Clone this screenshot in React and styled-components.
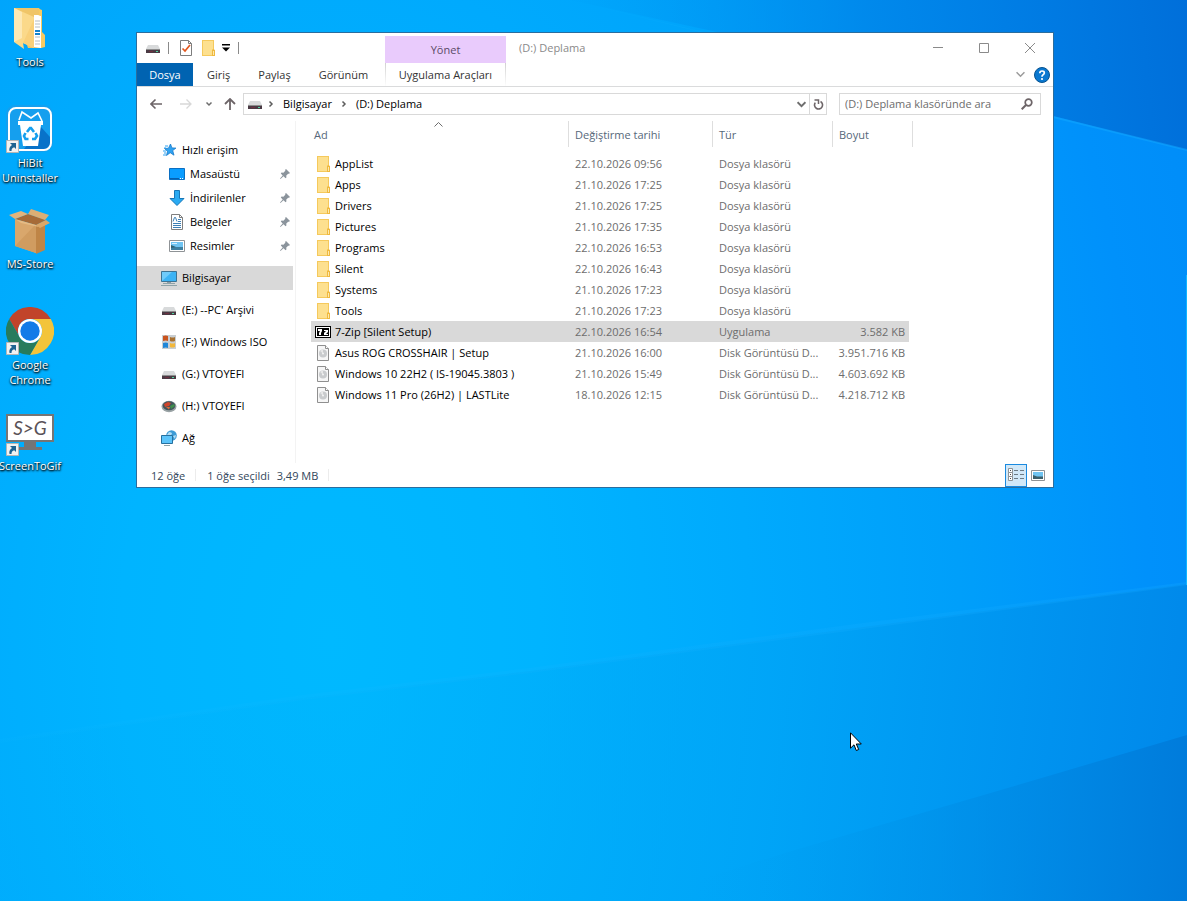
import React from 'react';
import styled, { createGlobalStyle, css } from 'styled-components';

const GlobalStyle = createGlobalStyle`
  * {
    box-sizing: border-box;
  }

  body {
    margin: 0;
    font-family: 'Open Sans', 'Noto Sans', sans-serif;
    font-size: 11px;
    line-height: 15px;
    color: #000;
  }

  button,
  input {
    font: inherit;
    color: inherit;
    margin: 0;
    padding: 0;
    border: 0;
    background: none;
  }

  svg {
    display: block;
    flex-shrink: 0;
  }
`;

const Desktop = styled.main`
  position: relative;
  min-height: 100vh;
  overflow: hidden;
  background: #00adff;
`;

const WallpaperSvg = styled.svg`
  position: absolute;
  inset: 0;
  width: 100%;
  height: 100%;
`;

const Shortcuts = styled.nav`
  position: relative;
  display: grid;
  grid-template-columns: 60px;
  grid-auto-rows: 101px;
  width: 60px;
  padding-top: 4px;
`;

const Shortcut = styled.a`
  display: flex;
  flex-direction: column;
  align-items: center;
  gap: 2px;
  color: #fff;
  text-align: center;
  text-decoration: none;
`;

const ShortcutIcon = styled.span`
  position: relative;
`;

const ShortcutBadge = styled.svg`
  position: absolute;
  left: 0;
  bottom: 0;
`;

const ShortcutLabel = styled.span`
  text-shadow: 0 1px 2px #000, 1px 1px 2px rgba(0, 0, 0, 0.9);
`;

const Window = styled.section`
  position: absolute;
  top: 32px;
  left: 136px;
  right: 133px;
  border: 1px solid #2a6d9e;
  background: #fff;
`;

const Ribbon = styled.header`
  display: flex;
  border-bottom: 1px solid #dadbdc;
`;

const RibbonStart = styled.div`
  flex: 0 0 248px;
`;

const RibbonContext = styled.div`
  flex: 0 0 121px;
  padding-top: 3px;
`;

const RibbonEnd = styled.div`
  flex: 1;
`;

const QuickBar = styled.div`
  display: flex;
  align-items: center;
  height: 30px;
  padding-left: 8px;
`;

const QuickButton = styled.button`
  display: flex;
  justify-content: center;
  width: ${(props) => props.$width || 22}px;
`;

const Separator = styled.span`
  width: 1px;
  height: 12px;
  margin-left: ${(props) => (props.$spaced ? 7 : 0)}px;
  background: #8a8a8a;
`;

const Tabs = styled.div`
  display: flex;
  height: 23px;
`;

const Tab = styled.button`
  padding: 0 14px;
  color: #333;

  ${(props) =>
    props.$active &&
    css`
      min-width: 56px;
      padding: 0 12px;
      background: #0063b1;
      color: #fff;
    `}
`;

const ContextTitle = styled.div`
  height: 27px;
  line-height: 27px;
  background: #e9cbfc;
  color: #5a4a66;
  text-align: center;
`;

const ContextTab = styled.button`
  width: 100%;
  height: 23px;
  border: 1px solid;
  border-width: 0 1px;
  border-image: linear-gradient(#cfcfcf, #fff) 1;
  color: #333;
`;

const TitleBar = styled.div`
  display: flex;
  align-items: center;
  height: 30px;
`;

const Title = styled.h1`
  flex: 1;
  margin: 0;
  padding: 0 0 2px 13px;
  font-size: 11px;
  font-weight: 400;
  color: #8a8a8a;
`;

const WindowButton = styled.button`
  display: flex;
  align-items: center;
  justify-content: center;
  width: 46px;
  height: 30px;
`;

const RibbonTools = styled.div`
  display: flex;
  align-items: center;
  justify-content: flex-end;
  gap: 8px;
  height: 23px;
  padding-right: 3px;
`;

const NavBar = styled.div`
  display: flex;
  align-items: center;
  height: 34px;
  padding: 0 12px 0 4px;
`;

const NavButton = styled.button`
  display: flex;
  justify-content: center;
  width: ${(props) => props.$width || 30}px;
`;

const AddressBar = styled.div`
  display: flex;
  flex: 1;
  align-items: center;
  height: 22px;
  padding-left: 3px;
  border: 1px solid #d9d9d9;
`;

const Crumb = styled.button`
  padding: 0 8px 2px;
`;

const CrumbArrow = styled.svg`
  margin-left: ${(props) => (props.$first ? 4 : 0)}px;
`;

const AddressEnd = styled.div`
  display: flex;
  align-items: center;
  height: 100%;
  margin-left: auto;
`;

const RefreshButton = styled.button`
  display: flex;
  align-items: center;
  justify-content: center;
  width: 17px;
  height: 100%;
  border-left: 1px solid #d9d9d9;
`;

const SearchBox = styled.label`
  display: flex;
  flex: 0 0 202px;
  align-items: center;
  height: 22px;
  margin-left: 12px;
  padding: 0 7px 0 5px;
  border: 1px solid #d9d9d9;
`;

const SearchInput = styled.input`
  flex: 1;
  min-width: 0;
  padding-bottom: 2px;
  outline: none;

  &::placeholder {
    color: #6d6d6d;
    opacity: 1;
  }
`;

const Body = styled.div`
  display: flex;
  min-height: 342px;
`;

const Sidebar = styled.nav`
  flex: 0 0 159px;
  padding: 17px 2px 0 0;
  border-right: 1px solid #f3f3f3;
`;

const SideGroup = styled.div`
  margin-bottom: 8px;
`;

const SideItem = styled.a`
  display: flex;
  align-items: center;
  gap: 5px;
  height: 24px;
  padding: 0 3px 0 ${(props) => (props.$nested ? 32 : 24)}px;
  background: ${(props) => (props.$active ? '#d9d9d9' : 'transparent')};
  color: #000;
  text-decoration: none;
  white-space: nowrap;
`;

const SideLabel = styled.span`
  flex: 1;
  padding-bottom: 2px;
`;

const Content = styled.div`
  flex: 1;
  min-width: 0;
  padding-left: 15px;
`;

const FileTable = styled.table`
  width: 602px;
  table-layout: fixed;
  border-spacing: 0;
`;

const HeaderCell = styled.th`
  position: relative;
  width: ${(props) => props.$width}px;
  height: 26px;
  padding: 0 0 0 ${(props) => (props.$first ? 3 : 6)}px;
  border-right: 1px solid #dedede;
  color: #56687a;
  font-weight: 400;
  text-align: left;
`;

const SortCaret = styled.svg`
  position: absolute;
  top: 1px;
  left: 123px;
`;

const FileBody = styled.tbody`
  &::before {
    content: '';
    display: block;
    height: 6px;
  }
`;

const FileRow = styled.tr`
  height: 21px;
  background: ${(props) => (props.$selected ? '#d9d9d9' : 'transparent')};
`;

const Cell = styled.td`
  padding: 0 6px;
  color: #6d6d6d;
  white-space: nowrap;
`;

const NameCell = styled(Cell)`
  padding: 0 4px;
  color: #000;
`;

const SizeCell = styled(Cell)`
  padding: 0 4px 0 0;
  border-right: 4px solid #fff;
  text-align: right;
`;

const FileName = styled.div`
  display: flex;
  align-items: center;
  gap: 4px;
`;

const StatusBar = styled.footer`
  display: flex;
  align-items: center;
  height: 24px;
  padding: 0 4px 0 14px;
  color: #33475b;
`;

const StatusText = styled.span`
  padding-right: ${(props) => (props.$tight ? 7 : 10)}px;
`;

const StatusDivider = styled.span`
  width: 1px;
  height: 12px;
  margin-right: 11px;
  background: #ececec;
`;

const ViewButtons = styled.div`
  display: flex;
  margin-left: auto;
`;

const ViewButton = styled.button`
  display: flex;
  align-items: center;
  justify-content: center;
  width: 22px;
  height: 23px;
  border: 1px solid ${(props) => (props.$active ? '#1a8ae0' : 'transparent')};
  background: ${(props) => (props.$active ? '#d1e8f8' : 'transparent')};
`;

const Pointer = styled.svg`
  position: absolute;
  top: 732px;
  left: 850px;
`;

const Wallpaper = () => (
  <WallpaperSvg viewBox="0 0 1187 901" preserveAspectRatio="none" aria-hidden="true">
    <defs>
      <radialGradient id="glow" gradientUnits="userSpaceOnUse" cx="330" cy="400" r="1050" gradientTransform="scale(1 1.6)">
        <stop offset="0" stopColor="#00b9ff" />
        <stop offset="0.2" stopColor="#00b4ff" />
        <stop offset="0.4" stopColor="#00aafd" />
        <stop offset="0.6" stopColor="#009ffa" />
        <stop offset="0.78" stopColor="#0091fb" />
        <stop offset="1" stopColor="#0088f5" />
      </radialGradient>
      <linearGradient id="top" gradientUnits="userSpaceOnUse" x1="560" y1="60" x2="1187" y2="0">
        <stop offset="0" stopColor="#0096f0" stopOpacity="0" />
        <stop offset="0.5" stopColor="#0084e8" stopOpacity="0.8" />
        <stop offset="1" stopColor="#006fda" />
      </linearGradient>
      <linearGradient id="low" gradientUnits="userSpaceOnUse" x1="350" y1="700" x2="1187" y2="800">
        <stop offset="0" stopColor="#00aff8" stopOpacity="0.2" />
        <stop offset="0.5" stopColor="#00a3f5" stopOpacity="0.7" />
        <stop offset="1" stopColor="#0088ea" />
      </linearGradient>
      <linearGradient id="corner" gradientUnits="userSpaceOnUse" x1="700" y1="860" x2="1187" y2="880">
        <stop offset="0" stopColor="#00a0f0" stopOpacity="0" />
        <stop offset="1" stopColor="#007bdb" />
      </linearGradient>
      <linearGradient id="beam" x1="0" x2="1">
        <stop offset="0" stopColor="#20bfff" stopOpacity="0.1" />
        <stop offset="1" stopColor="#10a5ff" stopOpacity="0.8" />
      </linearGradient>
    </defs>
    <rect width="1187" height="901" fill="url(#glow)" />
    <path d="M520 0H1187V150L1053 116L800 50L570 0Z" fill="url(#top)" />
    <path d="M570 0L1053 116L1187 149V151L1053 118Z" fill="url(#beam)" opacity="0.7" />
    <path d="M0 741L303 698L530 671L848 629L1187 584V901H0Z" fill="url(#low)" />
    <path d="M0 739L303 695L530 668L848 625L1187 582V585L848 631L530 673L303 700L0 743Z" fill="url(#beam)" opacity="0.4" />
    <path d="M630 901L795 850L1045 777L1187 735V901H640Z" fill="url(#corner)" />
    <path d="M1186 275h1v310h-1z" fill="#10b4ff" />
  </WallpaperSvg>
);

const DriveIcon = () => (
  <svg width="16" height="16" viewBox="0 0 16 16" aria-hidden="true">
    <path d="M3 5h10l2 4H1z" fill="#d8dadb" />
    <path d="M1 9h14v4H1z" fill="#4a3a44" />
    <path d="M1 9h14v1H1z" fill="#8d8d8d" />
    <path d="M11 11h2v1h-2z" fill="#4fd6a0" />
    <path d="M4 11h4v1H4z" fill="#6d3040" />
  </svg>
);

const FolderIcon = () => (
  <svg width="16" height="16" viewBox="0 0 16 16" aria-hidden="true">
    <path d="M2 0h12v10l1 1v5H2z" fill="#f5c95c" />
    <path d="M3 1h10v14H3z" fill="#fde08f" />
    <path d="M12 10l1-1l2 1v6h-3z" fill="#efb93f" />
    <path d="M13 11h1v4h-1z" fill="#fde9b0" />
  </svg>
);

const DiscFileIcon = () => (
  <svg width="16" height="16" viewBox="0 0 16 16" aria-hidden="true">
    <path d="M2.500.5h8l3 3v12h-11z" fill="#f6f6f6" stroke="#8f8f8f" />
    <path d="M10.500.5v3h3" fill="#fff" stroke="#8f8f8f" />
    <circle cx="8" cy="8.500" r="4" fill="#c9cbcd" />
    <path d="M8 8.500L5.200 6A4 4 0 0 1 8 4.800z" fill="#e8e8e8" />
    <circle cx="8" cy="8.500" r="1" fill="#f4f4f4" />
  </svg>
);

const SevenZipIcon = () => (
  <svg width="16" height="16" viewBox="0 0 16 16" aria-hidden="true">
    <path d="M0 2h16v12H0z" fill="#000" />
    <path d="M1 3h14v10H1z" fill="#fff" />
    <path d="M2 4h6v8H2zM8 4h6v8H8z" fill="#000" />
    <path d="M3 5h4v2L6 9v2H4V9l1-2H3z" fill="#fff" />
    <path d="M9 6h4v2l-2 2h2v1H9V9l2-2H9z" fill="#fff" />
  </svg>
);

const PageCheckIcon = () => (
  <svg width="16" height="16" viewBox="0 0 16 16" aria-hidden="true">
    <path d="M2.500.5h8l3 3v12h-11z" fill="#fff" stroke="#7d7d7d" />
    <path d="M10.500.5v3h3" fill="none" stroke="#7d7d7d" />
    <path d="M4.500 8.500l2.500 2.500l5-6" fill="none" stroke="#e2571e" strokeWidth="1.700" />
  </svg>
);

const StarIcon = () => (
  <svg width="16" height="16" viewBox="0 0 16 16" aria-hidden="true">
    <path d="M9.500 2l1.400 3.900l4 .2l-3.200 2.500l1.300 4.600l-3.800-2.500L5.500 13.500l1-4.200L3.500 6.500l4-.3z" fill="#2ea3f2" stroke="#1878c8" strokeWidth=".8" />
    <path d="M4 4h3M3 6h2M2 9h3M3 11h2M2 13h3" stroke="#2ea3f2" />
  </svg>
);

const ScreenIcon = () => (
  <svg width="16" height="16" viewBox="0 0 16 16" aria-hidden="true">
    <path d="M.5 2.500h15v11H.5z" fill="#0a9dff" stroke="#0a6fc2" />
    <path d="M1 12h9v1H1z" fill="#075fae" />
    <path d="M11 12h1v1h-1zM13 12h1v1h-1z" fill="#fff" />
  </svg>
);

const DownloadIcon = () => (
  <svg width="16" height="16" viewBox="0 0 16 16" aria-hidden="true">
    <path d="M5.500.5h5v8h4.500L8 15.500L1 8.500h4.500z" fill="#29aaf2" stroke="#1577b8" />
  </svg>
);

const DocumentIcon = () => (
  <svg width="16" height="16" viewBox="0 0 16 16" aria-hidden="true">
    <path d="M2.500.5h8l3 3v12h-11z" fill="#fff" stroke="#7f7f7f" />
    <path d="M10.500.5v3h3" fill="none" stroke="#7f7f7f" />
    <path d="M4 7.500l1.500-4h1L8 7.500M9 5.500h3M9 7.500h3M4 9.500h8M4 11.500h8M4 13.500h8" fill="none" stroke="#3c7fb5" />
  </svg>
);

const PictureIcon = () => (
  <svg width="16" height="16" viewBox="0 0 16 16" aria-hidden="true">
    <path d="M.5 2.500h15v11H.5z" fill="#fff" stroke="#8f9396" />
    <path d="M2 4h12v8H2z" fill="#6fc4f2" />
    <path d="M2 7l5 2h7v3H2z" fill="#2e6172" />
    <path d="M2 10l5-1h7v3H2z" fill="#3d7fa0" />
    <path d="M3 5h5v1H3z" fill="#d5efff" />
  </svg>
);

const ComputerIcon = () => (
  <svg width="16" height="16" viewBox="0 0 16 16" aria-hidden="true">
    <path d="M.5 1.500h15v10H.5z" fill="#3bb3f5" stroke="#3d7393" />
    <path d="M1 11V2h10z" fill="#6fcbfa" />
    <path d="M6 12h4v1H6z" fill="#8c9ba3" />
    <path d="M2 13h12v1H2zM0 15h16v1H0z" fill="#8fa3a8" />
  </svg>
);

const WindowsIcon = () => (
  <svg width="16" height="16" viewBox="0 0 16 16" aria-hidden="true">
    <path d="M1 1h14v14H1z" fill="#c9ced2" />
    <path d="M2 2q3-1 5 0v5q-2-1-5 0z" fill="#c9541e" />
    <path d="M9 3q3 1 5 0v4q-3 1-5 0z" fill="#a8702f" />
    <path d="M2 9q3-1 5 0v5q-2-1-5 0z" fill="#1f86d8" />
    <path d="M9 9q3 1 5 0v4q-3 1-5 0z" fill="#f2b73a" />
  </svg>
);

const DiscIcon = () => (
  <svg width="16" height="16" viewBox="0 0 16 16" aria-hidden="true">
    <ellipse cx="8" cy="8.500" rx="7.500" ry="5.800" fill="#9aa3a5" />
    <ellipse cx="8" cy="7.800" rx="6.300" ry="4.500" fill="#42555c" />
    <path d="M3 6l4-2l3 1l-2 3l-4 1z" fill="#d1452b" />
    <path d="M9 8l4-2l1 2l-4 3z" fill="#3f8f4c" />
    <path d="M5 9h4l-1 2.500z" fill="#d76a3a" />
  </svg>
);

const NetworkIcon = () => (
  <svg width="16" height="16" viewBox="0 0 16 16" aria-hidden="true">
    <circle cx="10.500" cy="5.500" r="5.300" fill="#3d9bd6" />
    <path d="M8 2q3 0 3 2l-2 2l-3-1zM12 6l3-1l-1 4z" fill="#b4def5" />
    <path d="M.5 5.500h11v8H.5z" fill="#5cc4fa" stroke="#27709e" />
    <path d="M3 15h6v1H3z" fill="#8fa3a8" />
  </svg>
);

const PinIcon = () => (
  <svg width="10" height="10" viewBox="0 0 10 10" aria-hidden="true">
    <path d="M6 0l4 4l-1 .8l-.8-.1L6.300 6.600l.1 1.800l-.8.8L3.500 7.300L.5 10L0 9.500l2.700-3L.8 4.400l.8-.8l1.800.1L5.300 1.800L5.200.8z" fill="#8b949c" />
  </svg>
);

const ToolsFolderIcon = () => (
  <svg width="48" height="48" viewBox="0 0 48 48" aria-hidden="true">
    <path d="M8 4h25l3 4v36H22z" fill="#f0c568" />
    <path d="M28 11h4l3 1v32l-7-1z" fill="#fff" />
    <path d="M29 17h5M29 20h5M29 23h5M29 33h5M29 37h5M29 40h5" stroke="#b4bdc6" />
    <path d="M29 27h5M29 30h5" stroke="#1383cf" strokeWidth="2" />
    <path d="M8 4l20 9v31L17 39l1 6L8 38z" fill="#fbd98a" />
    <path d="M8 4l8 4v26L8 38z" fill="#fde8b4" />
    <path d="M17 39l11-24v29z" fill="#f9d07a" />
    <path d="M33 5l3 1v22l3 3v12l-4 1V12l-2-1z" fill="#f6ca62" />
  </svg>
);

const UninstallerIcon = () => (
  <svg width="48" height="48" viewBox="0 0 48 48" aria-hidden="true">
    <rect width="47" height="47" rx="9" fill="#159fee" />
    <path d="M35 22l9 10v8l-4 4H18z" fill="#0872c9" />
    <rect x="3" y="3" width="42" height="42" rx="7" fill="none" stroke="#fff" strokeWidth="2" />
    <path d="M13 15l3-8l9 6l7-5l4 8" fill="none" stroke="#fff" strokeWidth="1.600" />
    <path d="M12 16h25v4h-2l-3 21H17l-3-21h-2z" fill="#fff" />
    <g fill="none" stroke="#159fee" strokeWidth="2.600">
      <path d="M21 27l3-4h1l3 4" />
      <path d="M29.500 28l1.500 3l-2 3h-3" />
      <path d="M22.500 34h-3l-1.500-3l1.500-3" />
    </g>
  </svg>
);

const BoxIcon = () => (
  <svg width="48" height="48" viewBox="0 0 48 48" aria-hidden="true">
    <path d="M9 13l21 6v28L9 40z" fill="#d9a76c" />
    <path d="M9 40l21-22v29z" fill="#d09c60" />
    <path d="M30 19l9-4v29l-9 4z" fill="#bf8546" />
    <path d="M9 13l13-5l18 6l-10 5z" fill="#a66b38" />
    <path d="M9 13L3 9l12-4l7 3z" fill="#e2b47c" />
    <path d="M22 8l3-5l18 6l-4 5z" fill="#dcae74" />
    <path d="M9 13l6 4l18 4l-3-2z" fill="#e5ba83" />
    <path d="M30 19l4 3l10-5l-4-3z" fill="#dba768" />
  </svg>
);

const ChromeIcon = () => (
  <svg width="48" height="48" viewBox="0 0 48 48" aria-hidden="true">
    <path d="M3.200 12A24 24 0 0 1 44.800 12H24A12 12 0 0 0 13.600 30z" fill="#c1442a" />
    <path d="M44.800 12A24 24 0 0 1 24 48L34.400 30A12 12 0 0 0 24 12z" fill="#f3c43a" />
    <path d="M24 48A24 24 0 0 1 3.200 12L13.600 30A12 12 0 0 0 34.400 30z" fill="#277b5c" />
    <circle cx="24" cy="24" r="12" fill="#fff" />
    <circle cx="24" cy="24" r="9.700" fill="#127be8" />
  </svg>
);

const ScreenToGifIcon = () => (
  <svg width="48" height="48" viewBox="0 0 48 48" aria-hidden="true">
    <path d="M1 7h46v26H1z" fill="#fff" stroke="#757575" strokeWidth="2" />
    <path d="M18 34h12v5h6v3H12v-3h6z" fill="#757575" />
    <text x="24" y="27" textAnchor="middle" fontFamily="Lato, sans-serif" fontStyle="italic" fontSize="19" fill="#5a5257">
      S&gt;G
    </text>
  </svg>
);

const ArrowBadge = () => (
  <ShortcutBadge width="13" height="13" viewBox="0 0 13 13" aria-hidden="true">
    <path d="M.5.5h12v12H.5z" fill="#f2f2f2" stroke="#b5b5b5" />
    <path d="M4 3h6v6L8.200 7.300Q5.500 8 5.500 11H3.500Q2.500 7.500 6 5z" fill="#1f6391" />
  </ShortcutBadge>
);

const Chevron = ({ d, size = 8, color = '#6d6d6d', stroke = 1.5 }) => (
  <svg width={size} height={size} viewBox="0 0 8 8" aria-hidden="true">
    <path d={d} fill="none" stroke={color} strokeWidth={stroke} />
  </svg>
);

const shortcuts = [
  { label: 'Tools', icon: <ToolsFolderIcon /> },
  { label: 'HiBit Uninstaller', icon: <UninstallerIcon />, linked: true },
  { label: 'MS-Store', icon: <BoxIcon /> },
  { label: 'Google Chrome', icon: <ChromeIcon />, linked: true },
  { label: 'ScreenToGif', icon: <ScreenToGifIcon />, linked: true },
];

const quickAccess = [
  { label: 'Masaüstü', icon: <ScreenIcon /> },
  { label: 'İndirilenler', icon: <DownloadIcon /> },
  { label: 'Belgeler', icon: <DocumentIcon /> },
  { label: 'Resimler', icon: <PictureIcon /> },
];

const places = [
  { label: 'Bilgisayar', icon: <ComputerIcon />, active: true },
  { label: "(E:) --PC' Arşivi", icon: <DriveIcon /> },
  { label: '(F:) Windows ISO', icon: <WindowsIcon /> },
  { label: '(G:) VTOYEFI', icon: <DriveIcon /> },
  { label: '(H:) VTOYEFI', icon: <DiscIcon /> },
  { label: 'Ağ', icon: <NetworkIcon /> },
];

const folder = { type: 'Dosya klasörü', icon: <FolderIcon />, size: '' };
const image = { type: 'Disk Görüntüsü D...', icon: <DiscFileIcon /> };

const files = [
  { ...folder, name: 'AppList', date: '22.10.2026 09:56' },
  { ...folder, name: 'Apps', date: '21.10.2026 17:25' },
  { ...folder, name: 'Drivers', date: '21.10.2026 17:25' },
  { ...folder, name: 'Pictures', date: '21.10.2026 17:35' },
  { ...folder, name: 'Programs', date: '22.10.2026 16:53' },
  { ...folder, name: 'Silent', date: '22.10.2026 16:43' },
  { ...folder, name: 'Systems', date: '21.10.2026 17:23' },
  { ...folder, name: 'Tools', date: '21.10.2026 17:23' },
  {
    name: '7-Zip [Silent Setup)',
    date: '22.10.2026 16:54',
    type: 'Uygulama',
    size: '3.582 KB',
    icon: <SevenZipIcon />,
    selected: true,
  },
  { ...image, name: 'Asus ROG CROSSHAIR | Setup', date: '21.10.2026 16:00', size: '3.951.716 KB' },
  { ...image, name: 'Windows 10 22H2 ( IS-19045.3803 )', date: '21.10.2026 15:49', size: '4.603.692 KB' },
  { ...image, name: 'Windows 11 Pro (26H2) | LASTLite', date: '18.10.2026 12:15', size: '4.218.712 KB' },
];

const ExplorerRibbon = () => (
  <Ribbon>
    <RibbonStart>
      <QuickBar>
        <QuickButton $width={16} aria-label="(D:)"><DriveIcon /></QuickButton>
        <Separator $spaced />
        <QuickButton $width={34} aria-label="Özellikler"><PageCheckIcon /></QuickButton>
        <QuickButton $width={10} aria-label="Yeni klasör"><FolderIcon /></QuickButton>
        <QuickButton $width={25} aria-label="Özelleştir">
          <svg width="8" height="8" viewBox="0 0 8 8" aria-hidden="true">
            <path d="M0 0h8v1.500H0zM0 3.500h8L4 7.500z" fill="#000" />
          </svg>
        </QuickButton>
        <Separator />
      </QuickBar>
      <Tabs>
        <Tab $active>Dosya</Tab>
        <Tab>Giriş</Tab>
        <Tab>Paylaş</Tab>
        <Tab>Görünüm</Tab>
      </Tabs>
    </RibbonStart>
    <RibbonContext>
      <ContextTitle>Yönet</ContextTitle>
      <ContextTab>Uygulama Araçları</ContextTab>
    </RibbonContext>
    <RibbonEnd>
      <TitleBar>
        <Title>(D:) Deplama</Title>
        <WindowButton aria-label="Simge durumuna küçült">
          <svg width="10" height="10" viewBox="0 0 10 10"><path d="M0 4h10v1H0z" fill="#8a8a8a" /></svg>
        </WindowButton>
        <WindowButton aria-label="Ekranı kapla">
          <svg width="10" height="10" viewBox="0 0 10 10"><path d="M.5.5h9v9h-9z" fill="none" stroke="#8a8a8a" /></svg>
        </WindowButton>
        <WindowButton aria-label="Kapat">
          <svg width="10" height="10" viewBox="0 0 10 10"><path d="M0 0l10 10M10 0L0 10" stroke="#8a8a8a" /></svg>
        </WindowButton>
      </TitleBar>
      <RibbonTools>
        <QuickButton $width={12} aria-label="Şeridi genişlet">
          <Chevron d="M.5 2l3.500 3.500l3.500-3.500" size={9} color="#9a9a9a" stroke={1.300} />
        </QuickButton>
        <QuickButton $width={16} aria-label="Yardım">
          <svg width="16" height="16" viewBox="0 0 16 16">
            <circle cx="8" cy="8" r="7.500" fill="#0a78d0" stroke="#07528f" />
            <path d="M5.800 6.200q0-2.200 2.300-2.200t2.200 2q0 1-1.200 1.700T8 9.800" fill="none" stroke="#fff" strokeWidth="1.700" />
            <circle cx="8" cy="12" r="1.100" fill="#fff" />
          </svg>
        </QuickButton>
      </RibbonTools>
    </RibbonEnd>
  </Ribbon>
);

const Navigation = () => (
  <NavBar>
    <NavButton aria-label="Geri">
      <svg width="12" height="12" viewBox="0 0 12 12">
        <path d="M12 6H1M5.500 1.500L1 6l4.500 4.500" fill="none" stroke="#6d6568" strokeWidth="1.600" />
      </svg>
    </NavButton>
    <NavButton aria-label="İleri">
      <svg width="12" height="12" viewBox="0 0 12 12">
        <path d="M0 6h11M6.500 1.500L11 6l-4.500 4.500" fill="none" stroke="#d8d8d8" strokeWidth="1.300" />
      </svg>
    </NavButton>
    <NavButton $width={16} aria-label="Son konumlar">
      <Chevron d="M1.500 2.500l2.500 2.500l2.500-2.500" />
    </NavButton>
    <NavButton $width={26} aria-label="Yukarı">
      <svg width="12" height="12" viewBox="0 0 12 12">
        <path d="M6 12V1M1 6l5-5l5 5" fill="none" stroke="#6d6568" strokeWidth="1.800" />
      </svg>
    </NavButton>
    <AddressBar>
      <DriveIcon />
      <CrumbArrow $first width="8" height="8" viewBox="0 0 8 8" aria-hidden="true">
        <path d="M2.500 1.500l2.500 2.500l-2.500 2.500" fill="none" stroke="#5e5e5e" strokeWidth="1.500" />
      </CrumbArrow>
      <Crumb>Bilgisayar</Crumb>
      <CrumbArrow width="8" height="8" viewBox="0 0 8 8" aria-hidden="true">
        <path d="M2.500 1.500l2.500 2.500l-2.500 2.500" fill="none" stroke="#5e5e5e" strokeWidth="1.500" />
      </CrumbArrow>
      <Crumb>(D:) Deplama</Crumb>
      <AddressEnd>
        <NavButton $width={16} aria-label="Önceki konumlar">
          <Chevron d="M.5 2l3.500 3.500l3.500-3.500" size={9} stroke={1.700} />
        </NavButton>
        <RefreshButton aria-label="Yenile">
          <svg width="11" height="11" viewBox="0 0 11 11">
            <path d="M7.500 2.500A4 4 0 1 1 2.300 3.600" fill="none" stroke="#6d6568" strokeWidth="1.600" />
            <path d="M1.500 1h4v4" fill="none" stroke="#6d6568" strokeWidth="1.500" />
          </svg>
        </RefreshButton>
      </AddressEnd>
    </AddressBar>
    <SearchBox>
      <SearchInput type="search" aria-label="Ara" placeholder="(D:) Deplama klasöründe ara" />
      <svg width="12" height="12" viewBox="0 0 12 12" aria-hidden="true">
        <circle cx="7.500" cy="4.500" r="3.300" fill="none" stroke="#6d6568" strokeWidth="1.700" />
        <path d="M5 7L.7 11.300" stroke="#6d6568" strokeWidth="2" />
      </svg>
    </SearchBox>
  </NavBar>
);

const Places = () => (
  <Sidebar>
    <SideGroup>
      <SideItem href="#quick">
        <StarIcon />
        <SideLabel>Hızlı erişim</SideLabel>
      </SideItem>
      {quickAccess.map((item) => (
        <SideItem key={item.label} href="#quick" $nested>
          {item.icon}
          <SideLabel>{item.label}</SideLabel>
          <PinIcon />
        </SideItem>
      ))}
    </SideGroup>
    {places.map((item) => (
      <SideGroup key={item.label}>
        <SideItem href="#place" $active={item.active}>
          {item.icon}
          <SideLabel>{item.label}</SideLabel>
        </SideItem>
      </SideGroup>
    ))}
  </Sidebar>
);

const FileList = () => (
  <Content>
    <FileTable>
      <thead>
        <tr>
          <HeaderCell $width={258} $first>
            Ad
            <SortCaret width="9" height="5" viewBox="0 0 9 5" aria-hidden="true">
              <path d="M.5 4.500l4-4l4 4" fill="none" stroke="#6d6d6d" />
            </SortCaret>
          </HeaderCell>
          <HeaderCell $width={144}>Değiştirme tarihi</HeaderCell>
          <HeaderCell $width={120}>Tür</HeaderCell>
          <HeaderCell $width={80}>Boyut</HeaderCell>
        </tr>
      </thead>
      <FileBody>
        {files.map((file) => (
          <FileRow key={file.name} $selected={file.selected}>
            <NameCell>
              <FileName>
                {file.icon}
                {file.name}
              </FileName>
            </NameCell>
            <Cell>{file.date}</Cell>
            <Cell>{file.type}</Cell>
            <SizeCell>{file.size}</SizeCell>
          </FileRow>
        ))}
      </FileBody>
    </FileTable>
  </Content>
);

const App = () => {
  return (
    <>
      <GlobalStyle />
      <Desktop>
        <Wallpaper />
        <Shortcuts>
          {shortcuts.map((item) => (
            <Shortcut key={item.label} href="#open">
              <ShortcutIcon>
                {item.icon}
                {item.linked && <ArrowBadge />}
              </ShortcutIcon>
              <ShortcutLabel>{item.label}</ShortcutLabel>
            </Shortcut>
          ))}
        </Shortcuts>
        <Window>
          <ExplorerRibbon />
          <Navigation />
          <Body>
            <Places />
            <FileList />
          </Body>
          <StatusBar>
            <StatusText>12 öğe</StatusText>
            <StatusDivider />
            <StatusText $tight>1 öğe seçildi</StatusText>
            <StatusText>3,49 MB</StatusText>
            <StatusDivider />
            <ViewButtons>
              <ViewButton $active aria-label="Ayrıntılar">
                <svg width="16" height="14" viewBox="0 0 16 14">
                  <path d="M.5.5h4v4h-4zM.5 4.500h4v4h-4zM.5 8.500h4v4h-4z" fill="#fff" stroke="#8f9396" />
                  <path d="M2 2h1v1H2zM2 6h1v1H2zM2 10h1v1H2z" fill="#4a4a4a" />
                  <path d="M6 2.500h4M12 2.500h4M6 6.500h4M12 6.500h4M6 10.500h4M12 10.500h4" stroke="#6d7b85" />
                </svg>
              </ViewButton>
              <ViewButton aria-label="Büyük simgeler">
                <svg width="14" height="11" viewBox="0 0 14 11">
                  <path d="M.5.5h13v10H.5z" fill="#fff" stroke="#8f9396" />
                  <path d="M2 2h10v7H2z" fill="#6fc4f2" />
                  <path d="M2 5l4 1.500h6V9H2z" fill="#3b5f6b" />
                </svg>
              </ViewButton>
            </ViewButtons>
          </StatusBar>
        </Window>
        <Pointer width="12" height="20" viewBox="0 0 12 20" aria-hidden="true">
          <path d="M.5.8v15.400l3.500-3.400l2.300 5.700l2.400-1l-2.400-5.500h5z" fill="#fff" stroke="#000" />
        </Pointer>
      </Desktop>
    </>
  );
};

export default App;
